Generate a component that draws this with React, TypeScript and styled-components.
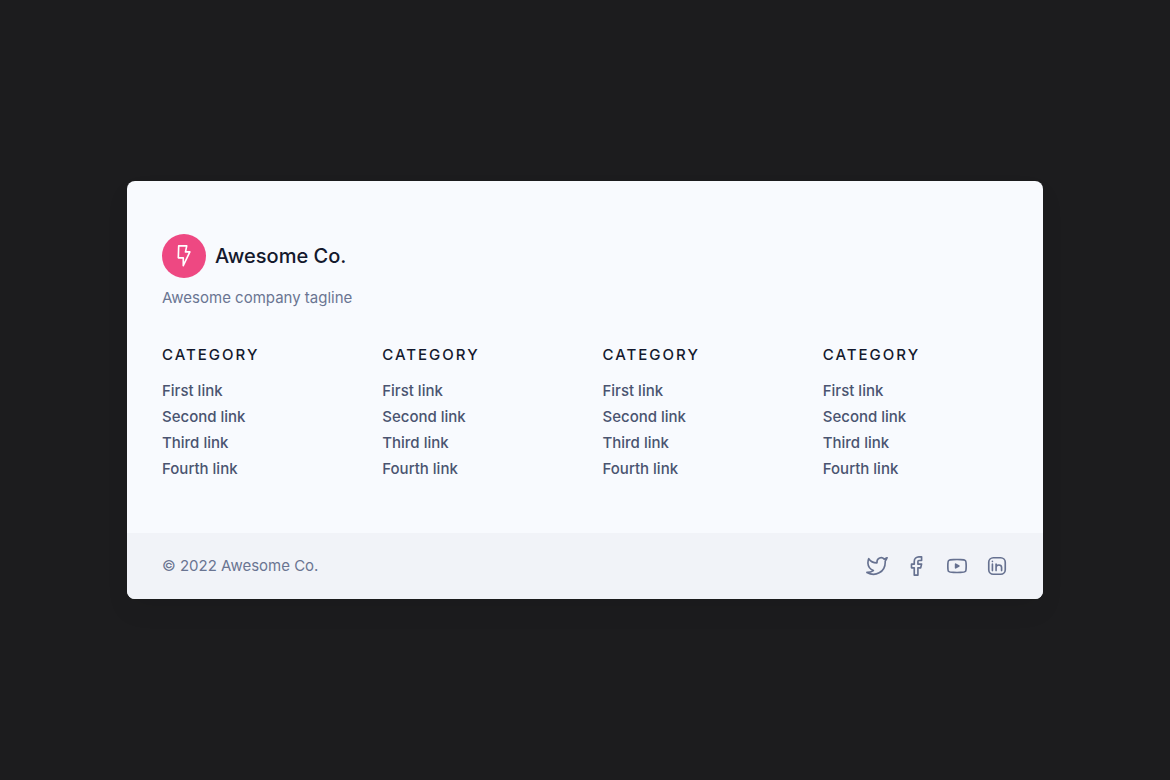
import React from "react";
import styled, { createGlobalStyle } from "styled-components";

const GlobalStyle = createGlobalStyle`
  *, *::before, *::after { box-sizing: border-box; }
  body {
    margin: 0;
    background: #1c1c1e;
    font-family: Inter, "Liberation Sans", sans-serif;
    font-size: 15px;
    line-height: 26px;
  }
`;

const Page = styled.main`
  min-height: 100vh;
  display: flex;
  align-items: center;
  justify-content: center;
  padding: 24px;
`;

const Footer = styled.footer`
  width: 100%;
  max-width: 916px;
  border-radius: 8px;
  overflow: hidden;
  background: #f8fafe;
  box-shadow: 0 12px 24px rgba(0, 0, 0, 0.06);
`;

const Content = styled.div`
  padding: 53px 35px 51px;
`;

const Brand = styled.a`
  display: inline-flex;
  align-items: center;
  gap: 9px;
  color: #14192d;
  font-size: 20px;
  font-weight: 500;
  text-decoration: none;
`;

const Logo = styled.span`
  display: grid;
  place-items: center;
  width: 44px;
  height: 44px;
  border-radius: 50%;
  background: #ee4882;
  color: #fff;
`;

const Tagline = styled.p`
  margin: 7px 0 31px;
  color: #6a7592;
`;

const Columns = styled.nav`
  display: grid;
  grid-template-columns: repeat(auto-fit, minmax(150px, 1fr));
  gap: 35px;
`;

const Heading = styled.h2`
  margin: 0 0 10px;
  color: #14192d;
  font-size: 15px;
  font-weight: 500;
  letter-spacing: 2px;
  text-transform: uppercase;
`;

const LinkList = styled.ul`
  margin: 0;
  padding: 0;
  list-style: none;
`;

const FooterLink = styled.a`
  color: #4a5470;
  font-weight: 500;
  text-decoration: none;
`;

const BottomBar = styled.div`
  display: flex;
  align-items: center;
  justify-content: space-between;
  padding: 20px 35px;
  background: #f1f3f8;
  color: #6a7592;
`;

const Socials = styled.div`
  display: flex;
  gap: 18px;
`;

const SocialLink = styled.a`
  display: flex;
  color: #667190;
`;

const Icon = styled.svg.attrs({
  viewBox: "0 0 24 24",
  fill: "none",
  stroke: "currentColor",
  strokeWidth: 1.8,
  strokeLinecap: "round",
  strokeLinejoin: "round",
  "aria-hidden": true,
})`
  display: block;
  width: 22px;
  height: 22px;
`;

const links = ["First link", "Second link", "Third link", "Fourth link"];
const categories = ["Category", "Category", "Category", "Category"];

const socials = [
  {
    name: "Twitter",
    shape: (
      <path d="M23 3.01s-2.018 1.192-3.14 1.53a4.48 4.48 0 0 0-7.86 3v1a10.66 10.66 0 0 1-9-4.53s-4 9 5 13a11.64 11.64 0 0 1-7 2c9 5 20 0 20-11.5 0-.279-.027-.556-.08-.83C21.94 5.674 23 3.01 23 3.01z" />
    ),
  },
  {
    name: "Facebook",
    shape: <path d="M17 2h-3a5 5 0 0 0-5 5v3H6v4h3v8h4v-8h3l1-4h-4V7a1 1 0 0 1 1-1h3V2z" />,
  },
  {
    name: "YouTube",
    shape: (
      <>
        <path d="M14 12l-3.5 2v-4l3.5 2z" fill="currentColor" />
        <path d="M2 12.707v-1.415c0-2.895 0-4.343.905-5.274.906-.932 2.332-.972 5.183-1.053C9.438 4.927 10.818 4.9 12 4.9s2.561.027 3.912.065c2.851.081 4.277.121 5.182 1.053.906.931.906 2.38.906 5.274v1.415c0 2.896 0 4.343-.905 5.275-.906.931-2.331.972-5.183 1.052-1.35.039-2.73.066-3.912.066s-2.561-.027-3.912-.066c-2.852-.08-4.277-.12-5.183-1.052C2 17.05 2 15.602 2 12.708z" />
      </>
    ),
  },
  {
    name: "LinkedIn",
    shape: (
      <>
        <path d="M21 8v8a5 5 0 0 1-5 5H8a5 5 0 0 1-5-5V8a5 5 0 0 1 5-5h8a5 5 0 0 1 5 5z" />
        <path d="M7 17v-7M11 17v-3.25M11 10v3.75m0 0c0-3.75 6-3.75 6 0V17M7 7.01l.01-.011" />
      </>
    ),
  },
];

export default function App() {
  return (
    <>
      <GlobalStyle />
      <Page>
        <Footer>
          <Content>
            <Brand href="#">
              <Logo>
                <Icon>
                  <path d="M6.2 1h8.8l-1.4 6.5h4.8L11.2 22.5V14H5.8z" />
                </Icon>
              </Logo>
              Awesome Co.
            </Brand>
            <Tagline>Awesome company tagline</Tagline>
            <Columns aria-label="Footer">
              {categories.map((category, index) => (
                <section key={index}>
                  <Heading>{category}</Heading>
                  <LinkList>
                    {links.map((link) => (
                      <li key={link}>
                        <FooterLink href="#">{link}</FooterLink>
                      </li>
                    ))}
                  </LinkList>
                </section>
              ))}
            </Columns>
          </Content>
          <BottomBar>
            <span>© 2022 Awesome Co.</span>
            <Socials>
              {socials.map(({ name, shape }) => (
                <SocialLink key={name} href="#" aria-label={name}>
                  <Icon>{shape}</Icon>
                </SocialLink>
              ))}
            </Socials>
          </BottomBar>
        </Footer>
      </Page>
    </>
  );
}
